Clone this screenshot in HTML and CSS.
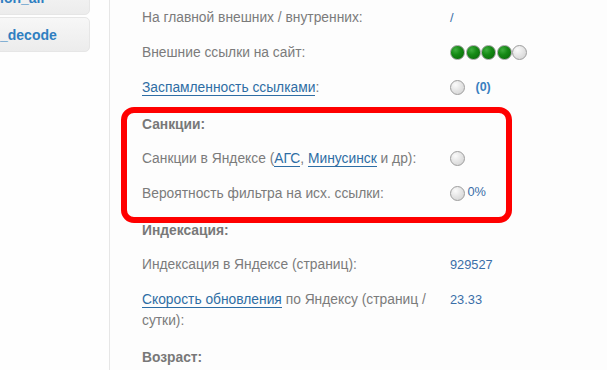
FILE: index.html
```html
<!DOCTYPE html>
<html>
<head>
<meta charset="utf-8">
<link rel="stylesheet" href="styles.css">
</head>
<body>
<div class="page">
  <aside class="sidebar">
    <div class="btn btn-top"><span>ion_all</span></div>
    <div class="btn"><span>_decode</span></div>
  </aside>
  <main class="content">
    <div class="row"><div class="label">На главной внешних / внутренних:</div><div class="value">/</div></div>
    <div class="row"><div class="label">Внешние ссылки на сайт:</div><div class="value"><span class="dot green"></span><span class="dot green"></span><span class="dot green"></span><span class="dot green"></span><span class="dot"></span></div></div>
    <div class="row"><div class="label"><a class="lnk">Заспамленность ссылками</a>:</div><div class="value"><span class="dot"></span><b class="count">(0)</b></div></div>
    <div class="row head"><div class="label">Санкции:</div></div>
    <div class="row"><div class="label">Санкции в Яндексе (<a class="lnk">АГС</a>, <a class="lnk">Минусинск</a> и др):</div><div class="value"><span class="dot"></span></div></div>
    <div class="row"><div class="label">Вероятность фильтра на исх. ссылки:</div><div class="value"><span class="dot"></span><span class="pct">0%</span></div></div>
    <div class="row head"><div class="label">Индексация:</div></div>
    <div class="row"><div class="label">Индексация в Яндексе (страниц):</div><div class="value">929527</div></div>
    <div class="row"><div class="label"><a class="lnk">Скорость обновления</a> по Яндексу (страниц / сутки):</div><div class="value">23.33</div></div>
    <div class="row head"><div class="label">Возраст:</div></div>
    <div class="highlight"></div>
  </main>
</div>
</body>
</html>
```
FILE: styles.css
```css
html, body {
  margin: 0;
  padding: 0;
  background: #fdfdfd;
  overflow: hidden;
}
body {
  font-family: "Liberation Sans", Arial, sans-serif;
  width: 607px;
  height: 370px;
}
.page {
  display: flex;
  height: 370px;
}
.sidebar {
  width: 109px;
  flex: none;
  border-right: 1px solid #e6e6e6;
  background: #fefefe;
  display: flex;
  flex-direction: column;
  gap: 2px;
  margin-top: -20px;
}
.btn {
  width: 100px;
  margin-left: -10px;
  height: 35px;
  box-sizing: border-box;
  border: 1px solid #e6e6e6;
  border-radius: 5px;
  background: linear-gradient(#f7f7f7, #ececec);
  display: flex;
  align-items: center;
  font-size: 14px;
  font-weight: bold;
  color: #2f7fc1;
  padding-left: 9px;
}
.btn-top span {
  position: relative;
  top: 0;
}
.content {
  position: relative;
  flex: 1;
  padding-left: 32px;
  background: #fdfdfd;
}
.row {
  display: flex;
  padding: 7px 0;
  line-height: 21px;
  font-size: 13.8px;
  color: #7b7b7b;
}
.row.head {
  padding-top: 9px;
  padding-bottom: 6px;
  font-weight: bold;
  color: #787878;
}
.label {
  width: 298px;
  flex: none;
}
.value {
  padding-left: 10px;
  display: flex;
  align-items: center;
  height: 21px;
  font-size: 12.8px;
  color: #3a6ea8;
}
.lnk {
  color: #2e6da4;
  text-decoration: none;
  border-bottom: 1px solid #2e6da4;
}
.dot {
  width: 13px;
  height: 13px;
  border-radius: 50%;
  border: 1.5px solid #9d9d9d;
  background: radial-gradient(circle at 35% 30%, #fbfbfb 0, #e6e6e6 45%, #cfcfcf 100%);
  margin-right: 0.5px;
  flex: none;
}
.dot.green {
  background: radial-gradient(circle at 35% 30%, #3fae3f 0, #168a16 40%, #066406 100%);
}
.count {
  margin-left: 10px;
  color: #3a7fc0;
  font-size: 12.5px;
}
.pct {
  margin-left: 2px;
  position: relative;
  top: -2px;
}
.highlight {
  position: absolute;
  left: 11px;
  top: 107px;
  width: 379px;
  height: 104px;
  border: 6px solid #ff0000;
  border-radius: 13px;
}
```
